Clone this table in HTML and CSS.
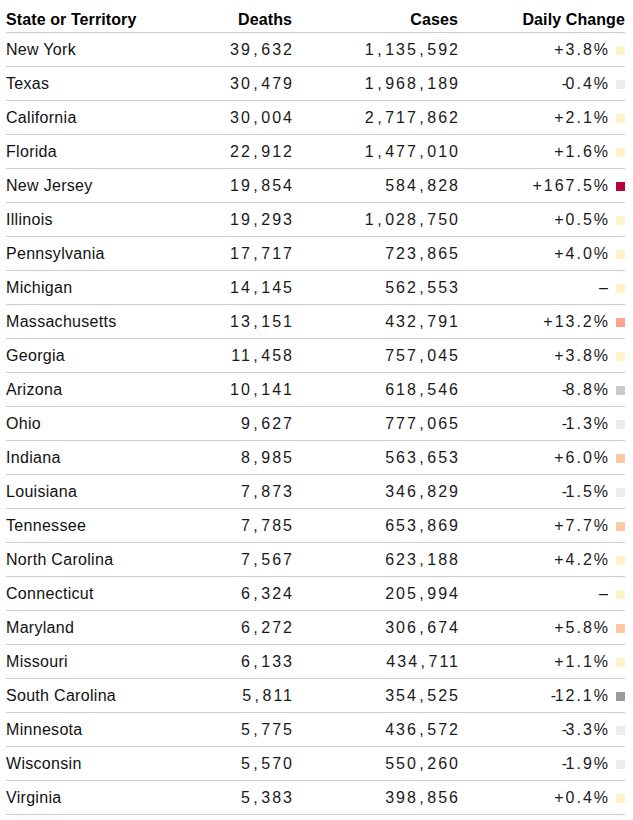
FILE: index.html
```html
<!DOCTYPE html>
<html lang="en">
<head>
<meta charset="utf-8">
<title>Deaths and cases by state</title>
<link rel="stylesheet" href="styles.css">
</head>
<body>
<div class="table">
  <div class="row head">
    <div class="name">State or Territory</div>
    <div class="num">Deaths</div>
    <div class="num">Cases</div>
    <div class="num">Daily Change</div>
  </div>
  <div class="row"><div class="name">New York</div><div class="num mono">39<i class="cm">,</i>632</div><div class="num mono">1<i class="cm">,</i>135<i class="cm">,</i>592</div><div class="chg"><span class="mono">+3.8%</span><i class="sq c-y"></i></div></div>
  <div class="row"><div class="name">Texas</div><div class="num mono">30<i class="cm">,</i>479</div><div class="num mono">1<i class="cm">,</i>968<i class="cm">,</i>189</div><div class="chg"><span class="mono"><b class="neg">-</b>0.4%</span><i class="sq c-l"></i></div></div>
  <div class="row"><div class="name">California</div><div class="num mono">30<i class="cm">,</i>004</div><div class="num mono">2<i class="cm">,</i>717<i class="cm">,</i>862</div><div class="chg"><span class="mono">+2.1%</span><i class="sq c-y"></i></div></div>
  <div class="row"><div class="name">Florida</div><div class="num mono">22<i class="cm">,</i>912</div><div class="num mono">1<i class="cm">,</i>477<i class="cm">,</i>010</div><div class="chg"><span class="mono">+1.6%</span><i class="sq c-y"></i></div></div>
  <div class="row"><div class="name">New Jersey</div><div class="num mono">19<i class="cm">,</i>854</div><div class="num mono">584<i class="cm">,</i>828</div><div class="chg"><span class="mono">+167.5%</span><i class="sq c-r"></i></div></div>
  <div class="row"><div class="name">Illinois</div><div class="num mono">19<i class="cm">,</i>293</div><div class="num mono">1<i class="cm">,</i>028<i class="cm">,</i>750</div><div class="chg"><span class="mono">+0.5%</span><i class="sq c-y"></i></div></div>
  <div class="row"><div class="name">Pennsylvania</div><div class="num mono">17<i class="cm">,</i>717</div><div class="num mono">723<i class="cm">,</i>865</div><div class="chg"><span class="mono">+4.0%</span><i class="sq c-y"></i></div></div>
  <div class="row"><div class="name">Michigan</div><div class="num mono">14<i class="cm">,</i>145</div><div class="num mono">562<i class="cm">,</i>553</div><div class="chg"><span class="mono">–</span><i class="sq c-y"></i></div></div>
  <div class="row"><div class="name">Massachusetts</div><div class="num mono">13<i class="cm">,</i>151</div><div class="num mono">432<i class="cm">,</i>791</div><div class="chg"><span class="mono">+13.2%</span><i class="sq c-s"></i></div></div>
  <div class="row"><div class="name">Georgia</div><div class="num mono">11<i class="cm">,</i>458</div><div class="num mono">757<i class="cm">,</i>045</div><div class="chg"><span class="mono">+3.8%</span><i class="sq c-y"></i></div></div>
  <div class="row"><div class="name">Arizona</div><div class="num mono">10<i class="cm">,</i>141</div><div class="num mono">618<i class="cm">,</i>546</div><div class="chg"><span class="mono"><b class="neg">-</b>8.8%</span><i class="sq c-g"></i></div></div>
  <div class="row"><div class="name">Ohio</div><div class="num mono">9<i class="cm">,</i>627</div><div class="num mono">777<i class="cm">,</i>065</div><div class="chg"><span class="mono"><b class="neg">-</b>1.3%</span><i class="sq c-l"></i></div></div>
  <div class="row"><div class="name">Indiana</div><div class="num mono">8<i class="cm">,</i>985</div><div class="num mono">563<i class="cm">,</i>653</div><div class="chg"><span class="mono">+6.0%</span><i class="sq c-p"></i></div></div>
  <div class="row"><div class="name">Louisiana</div><div class="num mono">7<i class="cm">,</i>873</div><div class="num mono">346<i class="cm">,</i>829</div><div class="chg"><span class="mono"><b class="neg">-</b>1.5%</span><i class="sq c-l"></i></div></div>
  <div class="row"><div class="name">Tennessee</div><div class="num mono">7<i class="cm">,</i>785</div><div class="num mono">653<i class="cm">,</i>869</div><div class="chg"><span class="mono">+7.7%</span><i class="sq c-p"></i></div></div>
  <div class="row"><div class="name">North Carolina</div><div class="num mono">7<i class="cm">,</i>567</div><div class="num mono">623<i class="cm">,</i>188</div><div class="chg"><span class="mono">+4.2%</span><i class="sq c-y"></i></div></div>
  <div class="row"><div class="name">Connecticut</div><div class="num mono">6<i class="cm">,</i>324</div><div class="num mono">205<i class="cm">,</i>994</div><div class="chg"><span class="mono">–</span><i class="sq c-y"></i></div></div>
  <div class="row"><div class="name">Maryland</div><div class="num mono">6<i class="cm">,</i>272</div><div class="num mono">306<i class="cm">,</i>674</div><div class="chg"><span class="mono">+5.8%</span><i class="sq c-p"></i></div></div>
  <div class="row"><div class="name">Missouri</div><div class="num mono">6<i class="cm">,</i>133</div><div class="num mono">434<i class="cm">,</i>711</div><div class="chg"><span class="mono">+1.1%</span><i class="sq c-y"></i></div></div>
  <div class="row"><div class="name">South Carolina</div><div class="num mono">5<i class="cm">,</i>811</div><div class="num mono">354<i class="cm">,</i>525</div><div class="chg"><span class="mono"><b class="neg">-</b>12.1%</span><i class="sq c-d"></i></div></div>
  <div class="row"><div class="name">Minnesota</div><div class="num mono">5<i class="cm">,</i>775</div><div class="num mono">436<i class="cm">,</i>572</div><div class="chg"><span class="mono"><b class="neg">-</b>3.3%</span><i class="sq c-l"></i></div></div>
  <div class="row"><div class="name">Wisconsin</div><div class="num mono">5<i class="cm">,</i>570</div><div class="num mono">550<i class="cm">,</i>260</div><div class="chg"><span class="mono"><b class="neg">-</b>1.9%</span><i class="sq c-l"></i></div></div>
  <div class="row"><div class="name">Virginia</div><div class="num mono">5<i class="cm">,</i>383</div><div class="num mono">398<i class="cm">,</i>856</div><div class="chg"><span class="mono">+0.4%</span><i class="sq c-y"></i></div></div>
</div>
</body>
</html>
```

FILE: styles.css
```css
html, body {
  margin: 0;
  padding: 0;
  background: #fff;
}
body {
  font-family: "Liberation Sans", Arial, sans-serif;
  font-size: 16px;
  color: #111;
}
.table {
  width: 619px;
  margin-left: 6px;
}
.row {
  display: grid;
  grid-template-columns: 166px 120px 166px 167px;
  align-items: baseline;
  height: 34px;
  box-sizing: border-box;
  padding-top: 8px;
  line-height: 18px;
  letter-spacing: 0.3px;
  border-bottom: 1px solid #cdcdcd;
}
.row.head {
  height: 33px;
  padding-top: 11px;
  font-weight: bold;
  letter-spacing: 0.1px;
  color: #000;
}
.name {
  white-space: nowrap;
}
.num {
  text-align: right;
  white-space: nowrap;
}
.mono {
  font-size: 16px;
  letter-spacing: 2px;
  margin-right: -2px;
  color: #1a1a1a;
}
.cm {
  font-style: normal;
  padding: 0 1.5px;
}
.chg {
  display: flex;
  justify-content: flex-end;
  align-items: center;
  gap: 8px;
  white-space: nowrap;
}
.neg {
  font-weight: normal;
  letter-spacing: 0;
  margin-right: -1.5px;
}
.sq {
  display: block;
  width: 9px;
  height: 9px;
  flex: none;
}
.c-y { background: #fef2c6; }
.c-l { background: #ececec; }
.c-r { background: #b6003f; }
.c-s { background: #fba590; }
.c-p { background: #fdc9a4; }
.c-g { background: #cbcbcb; }
.c-d { background: #9b9b9b; }
```
